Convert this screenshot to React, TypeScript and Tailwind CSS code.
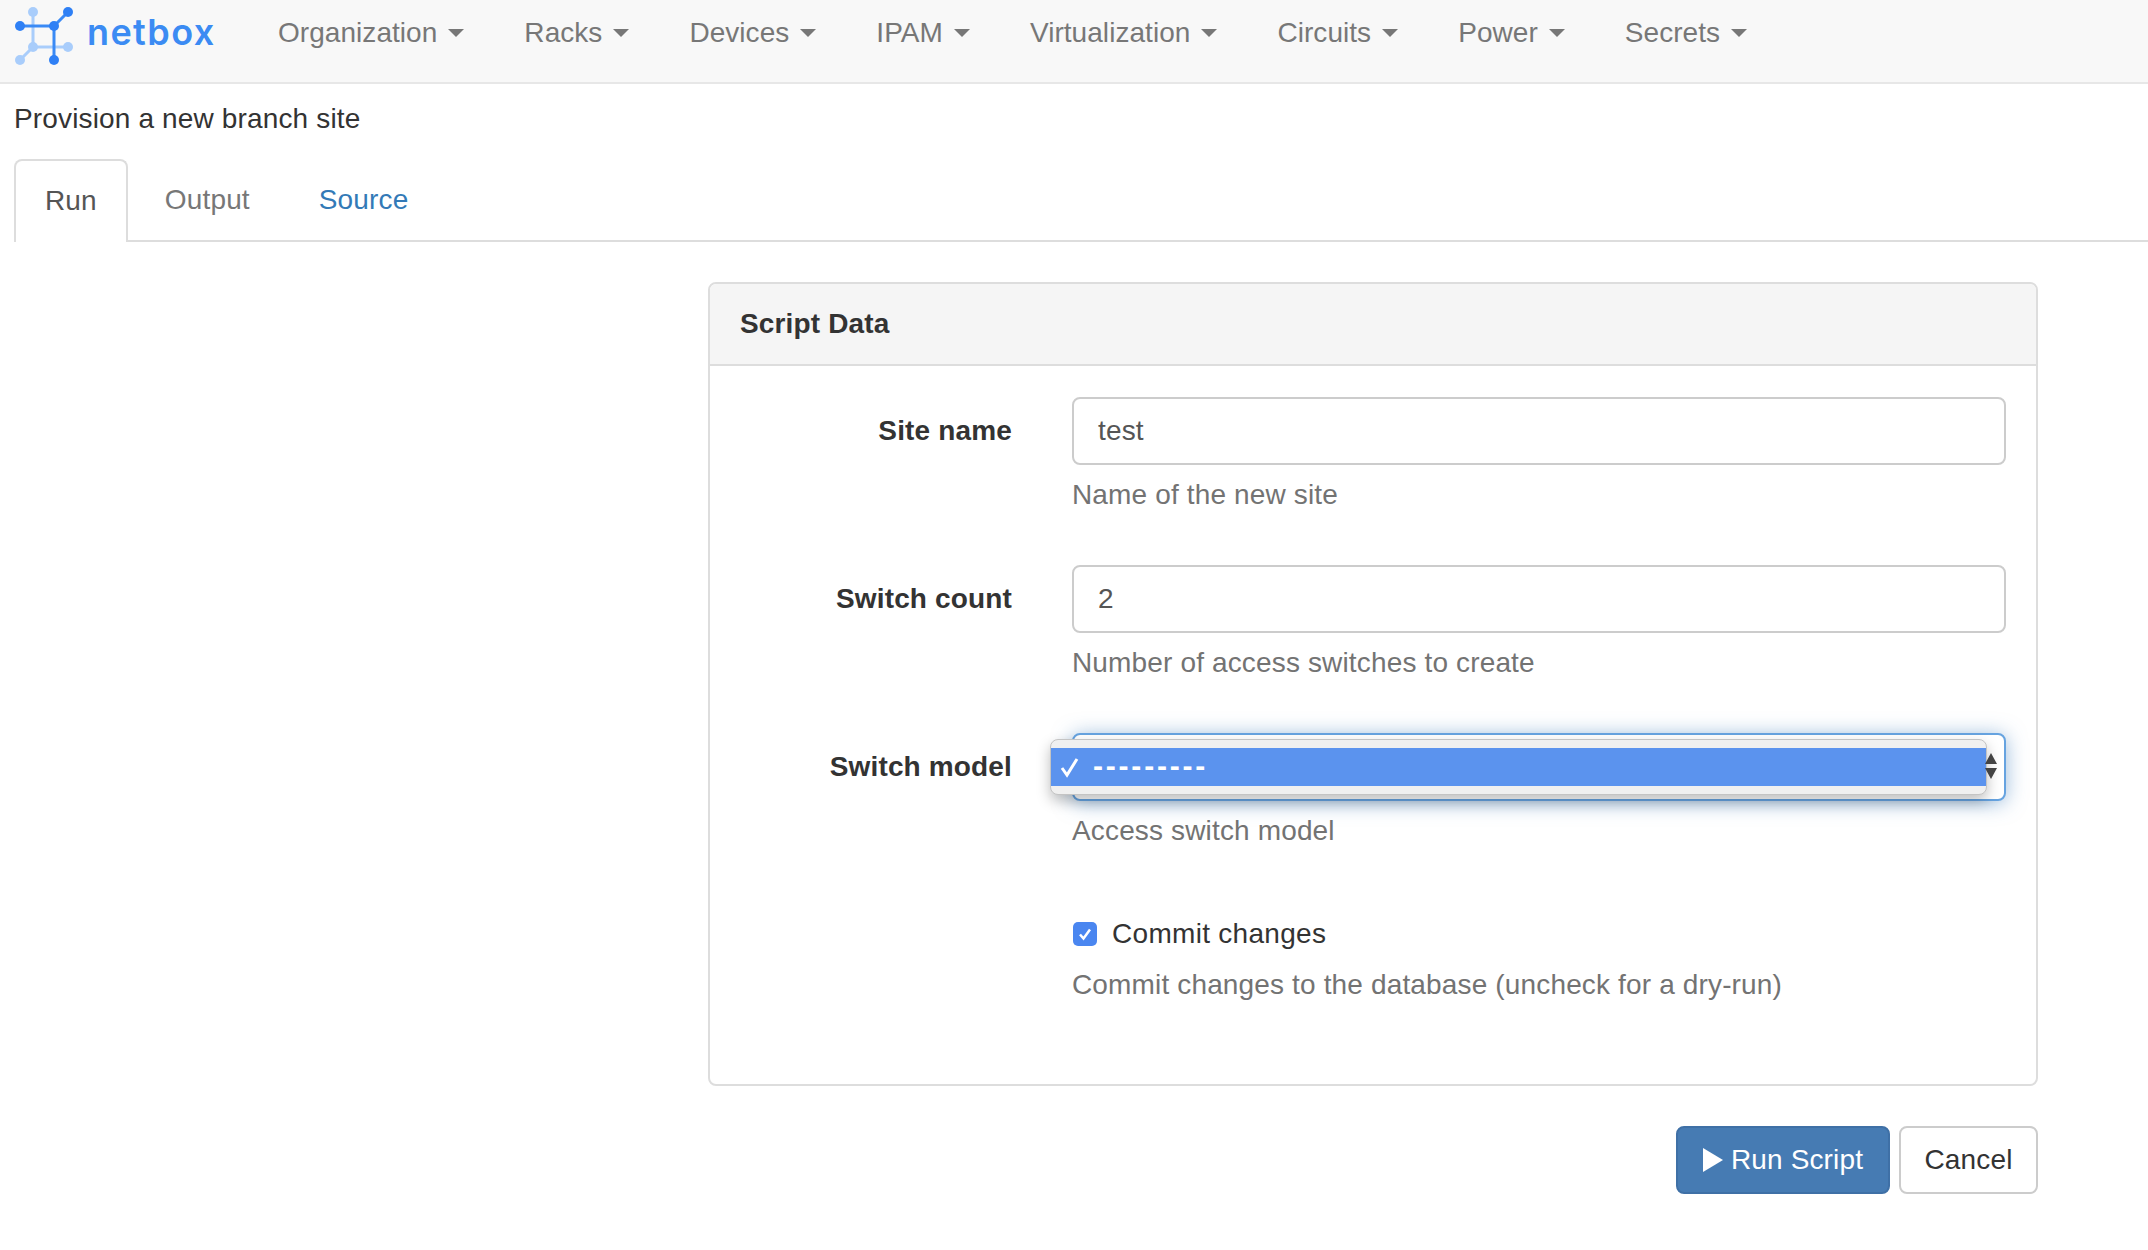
const navItems = ["Organization", "Racks", "Devices", "IPAM", "Virtualization", "Circuits", "Power", "Secrets"];

function Logo() {
  return (
    <svg width="70" height="64" viewBox="0 0 70 64" className="shrink-0">
      <g stroke="#a9cdfb" strokeWidth="3" fill="#a9cdfb">
        <line x1="19" y1="6" x2="19" y2="41" />
        <line x1="19" y1="41" x2="54" y2="41" />
        <line x1="19" y1="41" x2="6" y2="54" />
        <circle cx="19" cy="6" r="5" stroke="none" />
        <circle cx="19" cy="41" r="5" stroke="none" />
        <circle cx="54" cy="41" r="5" stroke="none" />
        <circle cx="6" cy="54" r="5" stroke="none" />
      </g>
      <g stroke="#3a8af5" strokeWidth="3" fill="#2f80f5">
        <line x1="6" y1="20" x2="40" y2="20" />
        <line x1="40" y1="20" x2="40" y2="54" />
        <line x1="40" y1="20" x2="54" y2="6" />
        <circle cx="6" cy="20" r="5" stroke="none" />
        <circle cx="40" cy="20" r="5" stroke="none" />
        <circle cx="54" cy="6" r="5" stroke="none" />
        <circle cx="40" cy="54" r="5" stroke="none" />
      </g>
    </svg>
  );
}

function TextRow({ label, value, help }: { label: string; value: string; help: string }) {
  return (
    <div className="grid grid-cols-[302px_1fr] gap-x-[60px] mb-[30px]">
      <label className="font-bold text-right leading-[68px]">{label}</label>
      <div>
        <div className="h-[68px] border-2 border-[#ccc] rounded-lg px-6 leading-[64px] text-[#555] bg-white">
          {value}
        </div>
        <p className="mt-[10px] mb-5 text-[#737373]">{help}</p>
      </div>
    </div>
  );
}

export default function App() {
  return (
    <div className="w-[2148px] h-[1250px] overflow-hidden bg-white text-[28px] leading-10 tracking-[0.15px] text-[#333] font-['Liberation_Sans',Arial,sans-serif]">
      <nav className="h-[84px] bg-[#f8f8f8] border-b-2 border-[#e7e7e7] flex items-start tracking-[0.05px]">
        <div className="flex items-start w-[248px] pl-[14px] pt-[6px]">
          <Logo />
          <span className="ml-[3px] mt-[3px] text-[36px] leading-[46px] font-semibold tracking-[1.4px] text-[#3b8bf3] font-['Inter',sans-serif]">
            netbox
          </span>
        </div>
        {navItems.map((name) => (
          <a key={name} className="flex items-center px-[30px] h-10 mt-[13px] text-[#777]">
            {name}
            <span className="ml-[11px] w-0 h-0 border-x-8 border-x-transparent border-t-8 border-t-[#777]" />
          </a>
        ))}
      </nav>

      <div className="pl-[14px]">
        <h1 className="mt-[15px] text-[28px] leading-10 font-normal">Provision a new branch site</h1>
        <div className="mt-[21px] flex items-end h-[82px] border-b-2 border-[#ddd]">
          <a className="-mb-[2px] h-[83px] px-[29px] leading-[79px] border-2 border-b-0 border-[#ddd] rounded-t-lg bg-white text-[#555]">
            Run
          </a>
          <a className="ml-[5px] h-[80px] px-8 leading-[80px] text-[#777]">Output</a>
          <a className="ml-[5px] h-[80px] px-8 leading-[80px] text-[#337ab7]">Source</a>
        </div>
      </div>

      <div className="mt-10 ml-[708px] w-[1330px]">
        <section className="h-[804px] border-2 border-[#ddd] rounded-lg">
          <h2 className="h-[82px] px-[30px] leading-[80px] font-bold bg-[#f5f5f5] border-b-2 border-[#ddd] rounded-t-md">
            Script Data
          </h2>
          <div className="pt-[31px] pr-[30px]">
            <TextRow label="Site name" value="test" help="Name of the new site" />
            <TextRow label="Switch count" value="2" help="Number of access switches to create" />

            <div className="grid grid-cols-[302px_1fr] gap-x-[60px]">
              <label className="font-bold text-right leading-[68px]">Switch model</label>
              <div>
                <div className="relative h-[68px] border-2 border-[#66a3e0] rounded-lg shadow-[0_2px_20px_rgba(70,130,190,0.55)] bg-white">
                  <div className="absolute left-[-24px] top-1 w-[937px] h-[56px] bg-[#f0f0f0] border border-[#c4c4c4] rounded-lg shadow-[0_6px_14px_rgba(0,0,0,0.25)] flex items-center">
                    <div className="w-full h-[38px] bg-[#5b93ee] flex items-center text-white">
                      <svg width="22" height="22" viewBox="0 0 22 22" className="ml-2" fill="none" stroke="white" strokeWidth="3">
                        <path d="M3 12l5 7L18 3" />
                      </svg>
                      <span className="ml-3 -mt-[2px] text-[30px] font-bold tracking-[2.8px]">---------</span>
                    </div>
                  </div>
                  <svg width="12" height="26" viewBox="0 0 12 26" className="absolute right-[7px] top-[18px]" fill="#444">
                    <path d="M6 0l6 11H0zM6 26L0 15h12z" />
                  </svg>
                </div>
                <p className="mt-[10px] mb-5 text-[#737373]">Access switch model</p>
              </div>
            </div>

            <div className="grid grid-cols-[302px_1fr] gap-x-[60px] mt-[43px]">
              <div />
              <div>
                <div className="flex items-center h-10">
                  <span className="ml-px w-6 h-6 rounded-[5px] bg-[#4a86f0] flex items-center justify-center">
                    <svg width="16" height="16" viewBox="0 0 16 16" fill="none" stroke="white" strokeWidth="2.5">
                      <path d="M3 8.5l3.5 4L13 3.5" />
                    </svg>
                  </span>
                  <span className="ml-[15px] tracking-[0.3px]">Commit changes</span>
                </div>
                <p className="mt-[11px] text-[#737373]">Commit changes to the database (uncheck for a dry-run)</p>
              </div>
            </div>
          </div>
        </section>

        <div className="mt-10 flex justify-end gap-[9px]">
          <button className="w-[214px] h-[68px] rounded-lg bg-[#467bb3] border-2 border-[#3f70a6] text-white flex items-center justify-center">
            <svg width="20" height="24" viewBox="0 0 20 24" className="mr-2" fill="white">
              <path d="M0 0l20 12L0 24z" />
            </svg>
            Run Script
          </button>
          <button className="w-[139px] h-[68px] rounded-lg bg-white border-2 border-[#ccc]">Cancel</button>
        </div>
      </div>
    </div>
  );
}
